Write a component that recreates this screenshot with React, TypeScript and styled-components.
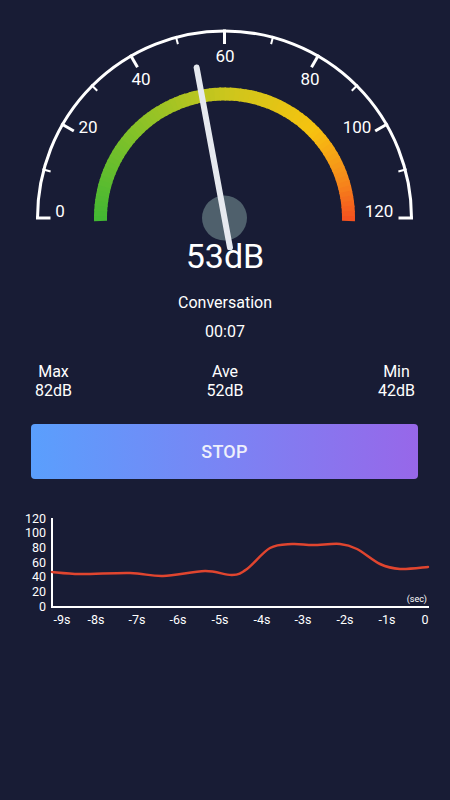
import styled, { createGlobalStyle } from "styled-components";

const GlobalStyle = createGlobalStyle`
  body {
    margin: 0;
    background: #181c35;
    font-family: Roboto, "Noto Sans", sans-serif;
    color: #ffffff;
  }
`;

// gauge geometry
const CX = 224.5;
const CY = 218;
const OUTER_R = 187;
const BAND_R = 124;

const polar = (r: number, deg: number) => {
  const a = (deg * Math.PI) / 180;
  return [CX + r * Math.cos(a), CY - r * Math.sin(a)];
};

const mix = (a: string, b: string, t: number) => {
  const pa = [1, 3, 5].map((i) => parseInt(a.slice(i, i + 2), 16));
  const pb = [1, 3, 5].map((i) => parseInt(b.slice(i, i + 2), 16));
  return `rgb(${pa.map((v, i) => Math.round(v + (pb[i] - v) * t)).join(",")})`;
};

const stops: [number, string][] = [
  [0, "#43b833"],
  [0.25, "#86c228"],
  [0.5, "#cbc61d"],
  [0.75, "#f7c30f"],
  [0.9, "#f68a1b"],
  [1, "#f4521f"],
];

const bandColor = (t: number) => {
  for (let i = 1; i < stops.length; i++) {
    if (t <= stops[i][0]) {
      const [t0, c0] = stops[i - 1];
      const [t1, c1] = stops[i];
      return mix(c0, c1, (t - t0) / (t1 - t0));
    }
  }
  return stops[stops.length - 1][1];
};

const bandSegments = () => {
  const segs = [];
  const from = 181.4;
  const to = -1.4;
  const n = 80;
  for (let i = 0; i < n; i++) {
    const a0 = from + ((to - from) * i) / n;
    const a1 = from + ((to - from) * (i + 1.3)) / n;
    const [x0, y0] = polar(BAND_R, a0);
    const [x1, y1] = polar(BAND_R, Math.max(a1, to));
    segs.push(
      <path
        key={i}
        d={`M${x0} ${y0} A${BAND_R} ${BAND_R} 0 0 1 ${x1} ${y1}`}
        stroke={bandColor(i / (n - 1))}
        strokeWidth={13}
        fill="none"
      />
    );
  }
  return segs;
};

const ticks = Array.from({ length: 13 }, (_, i) => i * 10);

const labels = [
  { t: "0", x: 60, y: 211 },
  { t: "20", x: 88, y: 127 },
  { t: "40", x: 141, y: 79 },
  { t: "60", x: 225, y: 56 },
  { t: "80", x: 310, y: 79 },
  { t: "100", x: 357, y: 127 },
  { t: "120", x: 379, y: 211 },
];

const value = 53;

// chart data, in chart pixels
const linePoints: [number, number][] = [
  [52, 71], [80, 73], [130, 72], [163, 75], [205, 70], [232, 74], [247, 68],
  [270, 47], [292, 43], [313, 44], [340, 43], [357, 48], [380, 63], [400, 68],
  [428, 66],
];

const smoothPath = (pts: [number, number][]) => {
  let d = `M${pts[0][0]} ${pts[0][1]}`;
  for (let i = 0; i < pts.length - 1; i++) {
    const p0 = pts[i - 1] || pts[i];
    const p1 = pts[i];
    const p2 = pts[i + 1];
    const p3 = pts[i + 2] || p2;
    const c1x = p1[0] + (p2[0] - p0[0]) / 6;
    const c1y = p1[1] + (p2[1] - p0[1]) / 6;
    const c2x = p2[0] - (p3[0] - p1[0]) / 6;
    const c2y = p2[1] - (p3[1] - p1[1]) / 6;
    d += ` C${c1x} ${c1y} ${c2x} ${c2y} ${p2[0]} ${p2[1]}`;
  }
  return d;
};

const yTicks = [0, 20, 40, 60, 80, 100, 120];
const xTicks = [
  { t: "-9s", x: 62 },
  { t: "-8s", x: 96 },
  { t: "-7s", x: 137 },
  { t: "-6s", x: 178 },
  { t: "-5s", x: 220 },
  { t: "-4s", x: 262 },
  { t: "-3s", x: 303 },
  { t: "-2s", x: 345 },
  { t: "-1s", x: 387 },
  { t: "0", x: 425 },
];

const App = () => {
  const needleDeg = 180 - (value / 120) * 180;
  const [tipX, tipY] = polar(153, needleDeg);
  const [tailX, tailY] = polar(-30, needleDeg);

  return (
    <Screen>
      <GlobalStyle />
      <GaugeSvg width={450} height={250} viewBox="0 0 450 250">
        <path
          d={`M${CX - OUTER_R} ${CY} A${OUTER_R} ${OUTER_R} 0 0 1 ${CX + OUTER_R} ${CY}`}
          stroke="#ffffff"
          strokeWidth={3}
          fill="none"
        />
        {ticks.map((v) => {
          const major = v % 20 === 0;
          const deg = 180 - v * 1.5;
          const [x0, y0] = polar(OUTER_R + 1.5, deg);
          const [x1, y1] = polar(OUTER_R - (major ? 13 : 7), deg);
          return (
            <line
              key={v}
              x1={x0}
              y1={y0}
              x2={x1}
              y2={y1}
              stroke="#ffffff"
              strokeWidth={major ? 3 : 2}
            />
          );
        })}
        {labels.map((l) => (
          <GaugeLabel key={l.t} x={l.x} y={l.y}>
            {l.t}
          </GaugeLabel>
        ))}
        {bandSegments()}
        <circle cx={CX} cy={CY} r={22.5} fill="#4f606c" />
        <line
          x1={tipX}
          y1={tipY}
          x2={tailX}
          y2={tailY}
          stroke="#e6e9ef"
          strokeWidth={6}
          strokeLinecap="round"
        />
      </GaugeSvg>
      <Reading>{value}dB</Reading>
      <Caption>Conversation</Caption>
      <Timer>00:07</Timer>
      <Stats>
        <Stat>
          <span>Max</span>
          <span>82dB</span>
        </Stat>
        <Stat>
          <span>Ave</span>
          <span>52dB</span>
        </Stat>
        <Stat>
          <span>Min</span>
          <span>42dB</span>
        </Stat>
      </Stats>
      <StopButton>STOP</StopButton>
      <ChartSvg width={450} height={140} viewBox="0 0 450 140">
        <path d="M52 17 V106 H429" stroke="#ffffff" strokeWidth={2} fill="none" />
        {yTicks.map((v) => (
          <AxisLabel key={v} x={46} y={105 - v * 0.733} textAnchor="end">
            {v}
          </AxisLabel>
        ))}
        {xTicks.map((l) => (
          <AxisLabel key={l.t} x={l.x} y={118} textAnchor="middle">
            {l.t}
          </AxisLabel>
        ))}
        <UnitLabel x={427} y={101} textAnchor="end">
          (sec)
        </UnitLabel>
        <path
          d={smoothPath(linePoints)}
          stroke="#e0452f"
          strokeWidth={2.5}
          fill="none"
          strokeLinecap="round"
        />
      </ChartSvg>
    </Screen>
  );
};

const Screen = styled.div`
  width: 450px;
  min-height: 800px;
  display: flex;
  flex-direction: column;
  align-items: stretch;
  background: #181c35;
`;

const GaugeSvg = styled.svg`
  display: block;
  position: relative;
  z-index: 1;
`;

const GaugeLabel = styled.text`
  font-family: Roboto, sans-serif;
  font-size: 17px;
  fill: #ffffff;
  text-anchor: middle;
  dominant-baseline: central;
`;

const Reading = styled.div`
  margin-top: -11px;
  font-size: 34px;
  line-height: 34px;
  text-align: center;
  color: #ffffff;
`;

const Caption = styled.div`
  margin-top: 20px;
  font-size: 16px;
  line-height: 20px;
  text-align: center;
`;

const Timer = styled(Caption)`
  margin-top: 9px;
`;

const Stats = styled.div`
  margin-top: 20px;
  padding: 0 35px;
  display: flex;
  justify-content: space-between;
`;

const Stat = styled.div`
  display: flex;
  flex-direction: column;
  align-items: center;
  font-size: 16px;
  line-height: 19px;
`;

const StopButton = styled.button`
  margin: 24px 32px 0 31px;
  height: 55px;
  border: none;
  border-radius: 4px;
  background: linear-gradient(90deg, #5a9ffd 0%, #7a84f4 50%, #9767e9 100%);
  color: #eef0fb;
  font-family: Roboto, sans-serif;
  font-size: 18px;
  font-weight: 500;
  letter-spacing: 0.2px;
`;

const ChartSvg = styled.svg`
  display: block;
  margin-top: 22px;
`;

const AxisLabel = styled.text`
  font-family: Roboto, sans-serif;
  font-size: 12.5px;
  fill: #ffffff;
  dominant-baseline: central;
`;

const UnitLabel = styled.text`
  font-family: Roboto, sans-serif;
  font-size: 9px;
  fill: #ffffff;
`;

export default App;
